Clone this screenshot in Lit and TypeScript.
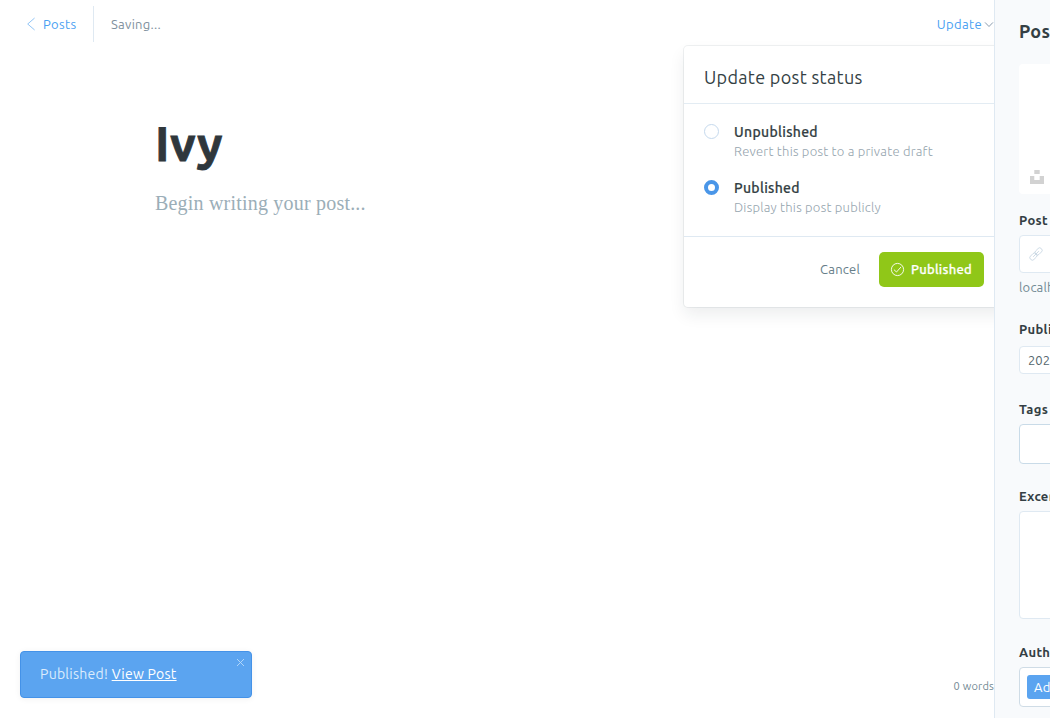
import { LitElement, html, css, svg } from "lit";
import { customElement, property } from "lit/decorators.js";

const chevron = (d: string) => svg`<path d=${d} fill="none" stroke="currentColor" stroke-width="0.9" stroke-linecap="round" stroke-linejoin="round"/>`;

@customElement("status-option")
class StatusOption extends LitElement {
  @property() label = "";
  @property() detail = "";
  @property({ type: Boolean }) selected = false;

  static styles = css`
    :host { display: flex; height: 56px; }
    .dot { box-sizing: border-box; width: 15px; height: 15px; margin-right: 15px; border: 1px solid #c5d9ed; border-radius: 50%; background: #fff; flex: none; }
    .dot.on { border: 4px solid #4a96e8; }
    .label { height: 19px; font-size: 14px; line-height: 16px; font-weight: 500; color: #343f44; letter-spacing: 0.32px; -webkit-text-stroke: 0.2px; white-space: nowrap; }
    .detail { font-size: 13px; line-height: 17px; font-weight: 300; color: #95a4ae; letter-spacing: 0.23px; white-space: nowrap; }
  `;

  render() {
    return html`
      <div class="dot ${this.selected ? "on" : ""}"></div>
      <div>
        <div class="label">${this.label}</div>
        <div class="detail">${this.detail}</div>
      </div>`;
  }
}

@customElement("publish-menu")
class PublishMenu extends LitElement {
  static styles = css`
    :host { box-sizing: border-box; display: block; width: 330px; height: 261px; background: #fff; border-radius: 4px; box-shadow: 0 0 0 1px rgba(99, 114, 130, 0.1), 0 8px 16px rgba(27, 39, 51, 0.08); }
    .title { box-sizing: border-box; height: 58px; padding: 19px 20px 0; border-bottom: 1px solid #e3ecf3; font-size: 18px; line-height: 24px; color: #343f44; letter-spacing: 0.31px; white-space: nowrap; }
    .options { box-sizing: border-box; height: 133px; padding: 20px 20px 0; border-bottom: 1px solid #dfe9f2; }
    .actions { display: flex; align-items: center; width: 300px; justify-content: flex-end; padding-top: 15px; }
    .cancel { margin-right: 19px; line-height: 16px; padding-bottom: 2px; font-size: 13px; color: #667d88; }
    .confirm { box-sizing: border-box; display: flex; align-items: center; width: 105px; height: 35px; padding-left: 11px; border-radius: 5px; background: #90c718; color: #fff; font-size: 13px; font-weight: 500; letter-spacing: 0.27px; }
    .confirm svg { margin-right: 6px; }
    .confirm span { line-height: 16px; padding-bottom: 2px; -webkit-text-stroke: 0.25px; }
  `;

  render() {
    return html`
      <div class="title">Update post status</div>
      <div class="options">
        <status-option label="Unpublished" detail="Revert this post to a private draft"></status-option>
        <status-option label="Published" detail="Display this post publicly" selected></status-option>
      </div>
      <div class="actions">
        <span class="cancel">Cancel</span>
        <span class="confirm">
          <svg width="15" height="15" viewBox="0 0 15 15" fill="none" stroke="currentColor" stroke-width="0.9">
            <circle cx="7.5" cy="7.5" r="6.1"></circle>
            <path d="M4.2 7.9L6.5 10L10.8 5.2" stroke-linecap="round" stroke-linejoin="round"></path>
          </svg>
          <span>Published</span>
        </span>
      </div>`;
  }
}

@customElement("settings-panel")
class SettingsPanel extends LitElement {
  static styles = css`
    :host { box-sizing: border-box; display: block; width: 56px; height: 718px; overflow: hidden; border-left: 1px solid #dfe9f2; background: #f8fafc; padding-left: 24px; }
    .inner { width: 302px; white-space: nowrap; }
    h4 { margin: 0; padding-top: 19px; height: 45px; font-size: 18px; line-height: 24px; font-weight: 600; color: #343f44; }
    .image { box-sizing: border-box; height: 130px; padding: 106px 0 0 11px; border-radius: 4px; background: #fff; }
    .image svg { display: block; }
    .label { font-size: 13px; line-height: 18px; font-weight: 700; color: #343f44; letter-spacing: 0.33px; }
    .box { box-sizing: border-box; border: 1px solid #dfe9f2; border-radius: 4px; background: #fff; display: flex; align-items: center; color: #54666d; font-size: 13px; }
    .l-url { margin-top: 17px; }
    .url { height: 38px; margin-top: 6px; padding-left: 8px; }
    .hint { margin-top: 5px; font-size: 13px; line-height: 18px; color: #738a94; }
    .l-date { margin-top: 24px; }
    .date { height: 28px; margin-top: 8px; padding-left: 8px; letter-spacing: 0; }
    .l-tags { margin-top: 26px; }
    .tags { height: 40px; margin-top: 6px; border-color: #c9dbe8; }
    .l-excerpt { margin-top: 23px; }
    .excerpt { height: 108px; margin-top: 6px; }
    .l-author { margin-top: 24px; }
    .author { height: 40px; margin-top: 6px; padding-left: 7px; border-color: #cfdce6; }
    .token { height: 24px; line-height: 24px; padding: 0 7px; border-radius: 3px; background: #5ba4f0; color: #fff; font-size: 13px; }
  `;

  render() {
    return html`
      <div class="inner">
        <h4>Post settings</h4>
        <div class="image">
          <svg width="14" height="14" viewBox="0 0 14 14" fill="#d2d2d2">
            <path d="M4.3 0h5.4v3.9H4.3zM0 6.1h4.3V10h5.4V6.1H14V14H0z"></path>
          </svg>
        </div>
        <div class="label l-url">Post URL</div>
        <div class="box url">
          <svg width="16" height="16" viewBox="0 0 16 16" fill="none" stroke="#c5d5e2" stroke-width="0.8">
            <g transform="rotate(-45 8 8)">
              <rect x="0.4" y="5.6" width="8" height="4.8" rx="2.2"></rect>
              <rect x="7.6" y="5.6" width="8" height="4.8" rx="2.2"></rect>
              <path d="M4 8H12"></path>
            </g>
          </svg>
        </div>
        <div class="hint">localhost:2368/ivy/</div>
        <div class="label l-date">Publish Date</div>
        <div class="box date">2020-01-01</div>
        <div class="label l-tags">Tags</div>
        <div class="box tags"></div>
        <div class="label l-excerpt">Excerpt</div>
        <div class="box excerpt"></div>
        <div class="label l-author">Authors</div>
        <div class="box author"><span class="token">Admin</span></div>
      </div>`;
  }
}

@customElement("app-root")
class AppRoot extends LitElement {
  static styles = css`
    :host { position: relative; display: flex; width: 1050px; height: 718px; overflow: hidden; background: #fff; font-family: Ubuntu, "Noto Sans", "Open Sans", sans-serif; letter-spacing: 0.2px; }
    .main { position: relative; box-sizing: border-box; display: flex; flex-direction: column; width: 994px; height: 718px; overflow: hidden; }
    header { display: flex; align-items: center; height: 48px; font-size: 13px; color: #7f919e; letter-spacing: 0.35px; white-space: nowrap; }
    .back { box-sizing: border-box; display: flex; align-items: center; width: 94px; height: 36px; padding-left: 26px; border-right: 1px solid #dfe9f2; color: #4a9ff2; }
    .back svg { margin-right: 7px; color: #86bef5; }
    .saving { flex: 1; padding-left: 17px; letter-spacing: 0.28px; }
    .update { display: flex; align-items: center; color: #4a9ff2; }
    .update svg { margin-left: 2px; color: #7d91a5; }
    .editor { flex: 1; padding: 63px 155px 0; }
    h1 { margin: 0; height: 66px; font-size: 48px; line-height: 64px; font-weight: 700; color: #2f373c; letter-spacing: 0.5px; -webkit-text-stroke: 0.8px; }
    .placeholder { margin-top: 10px; font: 20px/32px "Liberation Serif", serif; color: #9baeb8; }
    .words { height: 40px; text-align: right; font-size: 11px; line-height: 16px; color: #738a94; white-space: nowrap; }
    publish-menu { position: absolute; left: 684px; top: 46px; }
    .toast { position: absolute; left: 20px; top: 651px; box-sizing: border-box; display: flex; justify-content: space-between; width: 232px; height: 47px; padding: 0 6px 0 19px; border: 1px solid #4492e8; border-radius: 4px; background: #5ba4f0; box-shadow: 0 1px 6px rgba(0, 0, 0, 0.06); color: #dcecfc; font-size: 14px; line-height: 45px; letter-spacing: 0.27px; white-space: nowrap; }
    .link { color: #fff; text-decoration: underline; }
    .toast svg { margin-top: 6px; }
  `;

  render() {
    return html`
      <div class="main">
        <header>
          <div class="back">
            <svg width="10" height="14" viewBox="0 0 10 14">${chevron("M8.3 1.3L1.7 7L8.3 12.7")}</svg>
            <span>Posts</span>
          </div>
          <span class="saving">Saving...</span>
          <div class="update">
            <span>Update</span>
            <svg width="10" height="8" viewBox="0 0 10 8">${chevron("M1.3 2.7L5 6.5L8.7 2.7")}</svg>
          </div>
        </header>
        <div class="editor">
          <h1>Ivy</h1>
          <div class="placeholder">Begin writing your post...</div>
        </div>
        <div class="words">0 words</div>
        <publish-menu></publish-menu>
        <div class="toast">
          <span>Published! <span class="link">View Post</span></span>
          <svg width="9" height="9" viewBox="0 0 9 9"><path d="M1 1L8 8M8 1L1 8" fill="none" stroke="#b9dafb" stroke-width="0.9"/></svg>
        </div>
      </div>
      <settings-panel></settings-panel>`;
  }
}
